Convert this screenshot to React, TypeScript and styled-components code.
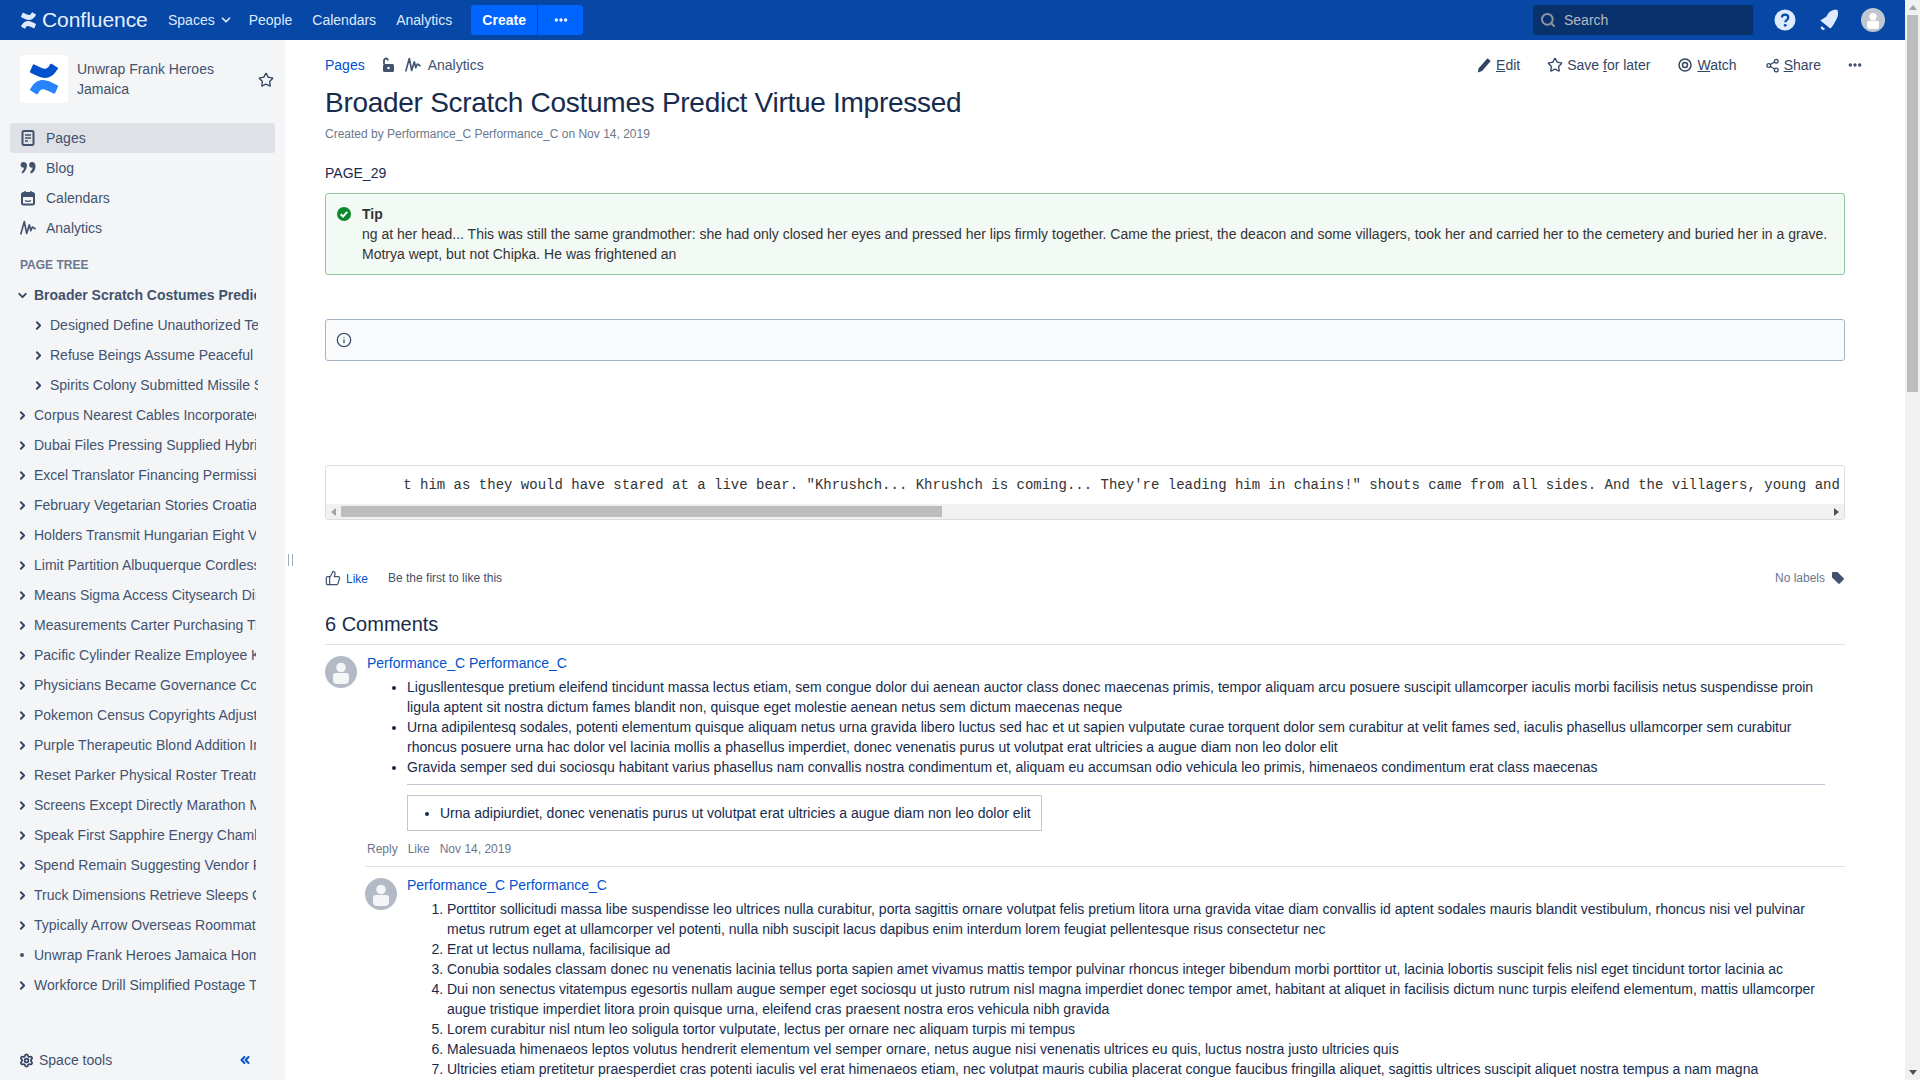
import React from "react";
import styled, { createGlobalStyle } from "styled-components";
import { Star, Share2, ThumbsUp, Info, ChevronRight, ChevronDown, ChevronsLeft, Search as SearchGlyph, Settings, MoreHorizontal } from "lucide-react";

const Global = createGlobalStyle`
  html, body { height: 100%; overflow: hidden; }
  body { margin: 0; background: #fff; color: #172B4D; font-family: "Liberation Sans", Arial, sans-serif; font-size: 14px; line-height: 20px; }
  * { box-sizing: border-box; }
`;

const Shell = styled.div`height: 100vh; display: flex; overflow: hidden;`;
const Frame = styled.div`flex: 1; min-width: 0; display: flex; flex-direction: column;`;

const ScrollRail = styled.div`width: 15px; flex: none; background: #F1F1F1; display: flex; flex-direction: column;`;
const RailThumb = styled.div`height: 377px; margin: 0 2px; background: #BDBDBD; flex: none;`;
const RailSpace = styled.div`flex: 1;`;
const ArrowCell = styled.div`width: 15px; height: 15px; flex: none; display: flex; align-items: center; justify-content: center;`;
const Tri = styled.span<{ $dir: "up" | "down" | "left" | "right"; $on?: boolean }>`
  width: 0; height: 0;
  ${p => {
    const c = p.$on ? "#505050" : "#A3A3A3";
    switch (p.$dir) {
      case "up": return `border-left: 4px solid transparent; border-right: 4px solid transparent; border-bottom: 5px solid ${c};`;
      case "down": return `border-left: 4px solid transparent; border-right: 4px solid transparent; border-top: 5px solid ${c};`;
      case "left": return `border-top: 4px solid transparent; border-bottom: 4px solid transparent; border-right: 5px solid ${c};`;
      default: return `border-top: 4px solid transparent; border-bottom: 4px solid transparent; border-left: 5px solid ${c};`;
    }
  }}
`;
const CodeScroll = styled.div`height: 15px; background: #F1F1F1; display: flex;`;
const CodeThumb = styled.div`width: 601px; margin: 2px 0 2px 0; background: #BDBDBD; flex: none;`;
const CodeSpace = styled.div`flex: 1;`;

const TopBar = styled.header`
  height: 40px; background: #0747A6; color: #DEEBFF; display: flex; align-items: center; padding-left: 20px; flex: none;
`;
const Brand = styled.div`display: flex; align-items: center; gap: 5px; width: 128px; color: #DEEBFF;`;
const BrandName = styled.span`font-size: 21px; line-height: 30px; letter-spacing: -0.05px; color: #E6EFFF;`;
const TopNav = styled.nav`display: flex; align-items: center; gap: 20px; margin-left: 20px;`;
const TopLink = styled.span<{ $menu?: boolean }>`display: inline-flex; align-items: center; gap: 4px; margin-right: ${p => (p.$menu ? "-4px" : "0")};`;
const CreateGroup = styled.div`display: flex; gap: 1px; margin-left: 19px;`;
const CreateButton = styled.span`
  width: 66px; height: 30px; background: #0065FF; color: #fff; font-weight: 700; display: flex; align-items: center; justify-content: center; border-radius: 3px 0 0 3px;
`;
const MoreButton = styled.span`
  width: 45px; height: 30px; background: #0065FF; color: #fff; display: flex; align-items: center; justify-content: center; border-radius: 0 3px 3px 0;
`;
const Tools = styled.div`margin-left: auto; display: flex; align-items: center; padding-right: 10px;`;
const SearchBox = styled.div`
  width: 220px; height: 30px; background: #09326C; border-radius: 3px; display: flex; align-items: center; gap: 8px; padding-left: 7px; color: #B3BAC5; margin-right: 10px;
`;
const ToolSlot = styled.span`width: 44px; display: flex; justify-content: center; align-items: center;`;

const Body = styled.div`display: flex; flex: 1; min-height: 0;`;
const Sidebar = styled.aside`
  width: 285px; position: relative; flex: none; background: #F4F5F7; color: #42526E; display: flex; flex-direction: column; padding-top: 15px;
`;
const SpaceHead = styled.div`display: flex; align-items: center; padding: 0 10px 0 20px; gap: 9px;`;
const SpaceLogo = styled.div`width: 48px; height: 48px; background: #fff; border-radius: 3px; display: flex; align-items: center; justify-content: center; flex: none;`;
const SpaceName = styled.div`width: 170px; color: #42526E;`;
const SpaceStar = styled.span`display: flex; margin: 1px 0 0 2px;`;
const NavList = styled.div`margin-top: 20px; padding: 0 10px;`;
const NavRow = styled.div<{ $active?: boolean }>`
  height: 30px; display: flex; align-items: center; gap: 10px; padding-left: 10px; border-radius: 3px; background: ${p => (p.$active ? "#DFE1E6" : "transparent")};
`;
const TreeLabel = styled.div`font-size: 12px; font-weight: 700; color: #6B778C; margin: 12px 0 5px 20px; height: 20px;`;
const TreeRow = styled.div<{ $child?: boolean }>`
  height: 30px; display: flex; align-items: center; padding-left: ${p => (p.$child ? "32px" : "16px")};
`;
const TreeMark = styled.span`width: 18px; flex: none; display: flex; align-items: center; justify-content: flex-start; color: #344563;`;
const TreeText = styled.span<{ $child?: boolean; $bold?: boolean }>`
  width: ${p => (p.$child ? "208px" : "222px")}; overflow: hidden; white-space: nowrap; font-weight: ${p => (p.$bold ? 700 : 400)};
`;
const Bullet = styled.span`width: 4px; height: 4px; border-radius: 50%; background: #42526E; margin-left: 4px;`;
const SideFooter = styled.div`margin-top: auto; height: 40px; display: flex; align-items: center; padding: 0 33px 0 19px; color: #42526E; gap: 5px;`;
const Collapse = styled.span`margin-left: auto; display: flex; color: #0052CC;`;
const Grip = styled.span`
  position: absolute; left: 288px; top: 514px; width: 5px; height: 12px; border-left: 1px solid #A5ADBA; border-right: 1px solid #A5ADBA;
`;

const Main = styled.main`flex: 1; min-width: 0; overflow: hidden; padding: 15px 60px 0 40px;`;
const PageBar = styled.div`display: flex; align-items: center; height: 20px;`;
const Crumb = styled.a`color: #0052CC;`;
const CrumbIcon = styled.span<{ $gap: number }>`display: flex; margin-left: ${p => p.$gap}px;`;
const CrumbText = styled.span`color: #42526E; margin-left: 7px;`;
const Actions = styled.div`margin-left: auto; display: flex; align-items: center; gap: 28px; margin-right: -18px; color: #344563;`;
const Action = styled.span`display: flex; align-items: center; gap: 4px;`;
const TightAction = styled(Action)`margin-left: -1px;`;
const MoreAction = styled(Action)`margin-left: -2px;`;
const Title = styled.h1`margin: 12px 0 0; font-size: 28px; line-height: 32px; font-weight: 400; letter-spacing: -0.01em; color: #172B4D;`;
const Byline = styled.div`margin-top: 5px; font-size: 12px; color: #6B778C;`;
const Para = styled.p`margin: 19px 0 0;`;
const TipBox = styled.div`
  margin-top: 10px; border: 1px solid #8FC79A; background: #F3F9F4; border-radius: 3px; padding: 10px 10px 10px 36px; position: relative; color: #333;
`;
const TipIcon = styled.span`position: absolute; left: 10px; top: 12px; display: flex;`;
const TipTitle = styled.div`font-weight: 700;`;
const InfoBox = styled.div`
  margin-top: 44px; height: 42px; border: 1px solid #A5B4C8; background: #FAFBFC; border-radius: 3px; display: flex; align-items: center; padding-left: 10px; color: #42526E;
`;
const CodeBox = styled.div`
  margin-top: 104px; border: 1px solid #DDD; border-radius: 3px; overflow: hidden; background: #fff;
`;
const CodeLine = styled.pre`
  margin: 0; padding: 9px 0 9px 10px; overflow: hidden; font-family: "Liberation Mono", "Courier New", monospace; font-size: 14px; line-height: 20px; color: #333; white-space: pre;
`;
const LikeRow = styled.div`margin-top: 48px; height: 20px; display: flex; align-items: center; font-size: 12px; color: #42526E;`;
const LikeLink = styled.a`color: #0052CC; margin-left: 5px; margin-top: 2px;`;
const LikeNote = styled.span`margin-left: 20px;`;
const Labels = styled.span`margin-left: auto; display: flex; align-items: center; gap: 6px; color: #6B778C;`;
const CommentsTitle = styled.h2`
  margin: 22px 0 0; padding-bottom: 6px; border-bottom: 1px solid #DFE1E6; font-size: 20px; line-height: 28px; font-weight: 400; color: #172B4D;
`;
const Comment = styled.article<{ $nested?: boolean }>`
  display: flex; gap: 10px; padding-top: 8px; margin-left: ${p => (p.$nested ? "40px" : "0")};
  border-top: ${p => (p.$nested ? "1px solid #DFE1E6" : "none")}; margin-top: ${p => (p.$nested ? "7px" : "0")};
`;
const AvatarWrap = styled.span`flex: none; width: 32px; height: 32px; margin-top: 3px; display: block;`;
const CommentBody = styled.div`flex: 1; min-width: 0; padding-right: 20px;`;
const Author = styled.a`color: #0052CC; display: block;`;
const BulletList = styled.ul`margin: 4px 0 0; padding-left: 40px;`;
const NumberList = styled.ol`margin: 4px 0 0; padding-left: 40px;`;
const Rule = styled.hr`margin: 7px 0 10px 40px; border: 0; border-top: 1px solid #C1C7D0;`;
const Quote = styled.div`
  margin-left: 40px; display: inline-block; border: 1px solid #C1C7D0; padding: 7px 10px 7px 0; vertical-align: top;
`;
const QuoteList = styled.ul`margin: 0; padding-left: 32px;`;
const CommentActions = styled.div`margin-top: 8px; height: 20px; display: flex; gap: 10px; font-size: 12px; color: #6B778C;`;

const ConfMark = ({ size, a, b }: { size: number; a: string; b: string }) => (
  <svg width={size} height={size} viewBox="0 0 24 24" aria-hidden="true">
    <path fill={a} d="M2.3 18.5c-.2.4-.5.9-.7 1.2-.2.3-.1.8.3 1l4.4 2.7c.4.2.8.1 1.1-.3.2-.3.4-.7.7-1.2 1.8-3 3.6-2.6 6.8-1.1l4.4 2.1c.4.2.9 0 1.1-.4l2.1-4.7c.2-.4 0-.9-.4-1.1-.9-.4-2.8-1.3-4.4-2.1-6-2.9-11.1-2.7-15.4 3.9z" />
    <path fill={b} d="M21.7 5.5c.2-.4.5-.9.7-1.2.2-.3.1-.8-.3-1L17.7.6c-.4-.2-.8-.1-1.1.3-.2.3-.4.7-.7 1.2-1.8 3-3.6 2.6-6.8 1.1L4.7 1.1c-.4-.2-.9 0-1.1.4L1.5 6.2c-.2.4 0 .9.4 1.1.9.4 2.8 1.3 4.4 2.1 6 2.9 11.1 2.7 15.4-3.9z" />
  </svg>
);
const PagesIcon = () => (
  <svg width="16" height="16" viewBox="0 0 16 16" fill="none" aria-hidden="true">
    <rect x="2.5" y="1" width="11" height="14" rx="1.5" stroke="#42526E" strokeWidth="2" />
    <path d="M5 5h6M5 8h6M5 11h3" stroke="#42526E" strokeWidth="1.5" />
  </svg>
);
const BlogIcon = () => (
  <svg width="16" height="16" viewBox="0 0 16 16" fill="#42526E" aria-hidden="true">
    <path d="M3.5 2C1.8 2 .6 3.2.6 4.900s1.200 2.800 2.700 2.800c.3 0 .6 0 .8-.1-.2 1.600-1.200 3.400-2.600 4.600l1.200 1.400C5 11.500 7 8.600 7 5.400 7 3.300 5.600 2 3.500 2z" />
    <path d="M12 2c-1.700 0-2.900 1.200-2.900 2.900s1.200 2.800 2.700 2.800c.3 0 .6 0 .8-.1-.2 1.600-1.200 3.400-2.600 4.600l1.200 1.400c2.300-1.100 4.300-4 4.300-7.200C15.500 3.300 14.100 2 12 2z" />
  </svg>
);
const CalendarIcon = () => (
  <svg width="16" height="16" viewBox="0 0 16 16" fill="none" aria-hidden="true">
    <rect x="2" y="3" width="12" height="11.500" rx="1.500" stroke="#42526E" strokeWidth="2" />
    <path d="M2 5.500h12" stroke="#42526E" strokeWidth="3" />
    <path d="M5 1v3M11 1v3" stroke="#42526E" strokeWidth="1.500" />
    <path d="M5 10.500c1.500 1.200 4.500 1.200 6 0" stroke="#42526E" strokeWidth="1.300" />
  </svg>
);
const WaveIcon = () => (
  <svg width="16" height="16" viewBox="0 0 16 16" fill="none" aria-hidden="true">
    <path d="M.7 14.500L4.300 1.500 6.700 13.500 9.300 4.800l1.500 6 1.500-3.800 3.300 2" stroke="#42526E" strokeWidth="1.600" strokeLinejoin="round" />
  </svg>
);
const LockIcon = () => (
  <svg width="14" height="16" viewBox="0 0 14 16" aria-hidden="true">
    <path d="M3 7V3.500a2 2 0 0 1 4 0" fill="none" stroke="#42526E" strokeWidth="1.800" />
    <rect x="2" y="7" width="11" height="8" rx="1.500" fill="#42526E" />
    <circle cx="7.500" cy="11" r="1.300" fill="#fff" />
  </svg>
);
const PencilIcon = () => (
  <svg width="16" height="16" viewBox="0 0 16 16" fill="#344563" aria-hidden="true">
    <path d="M11.500 1.300l3.200 2.700-8.600 10L1.800 15.500l.9-4.200z" />
  </svg>
);
const EyeIcon = () => (
  <svg width="16" height="16" viewBox="0 0 16 16" fill="none" aria-hidden="true">
    <circle cx="8" cy="8" r="6" stroke="#344563" strokeWidth="1.500" />
    <circle cx="8" cy="8" r="2.500" stroke="#344563" strokeWidth="1.500" />
  </svg>
);
const TagIcon = () => (
  <svg width="14" height="14" viewBox="0 0 14 14" fill="#42526E" aria-hidden="true">
    <path d="M1 1.800C1 1.300 1.300 1 1.800 1H6.500l6.200 6.200c.4.4.4 1 0 1.400l-4 4c-.4.4-1 .4-1.400 0L1 6.500z" />
  </svg>
);
const TipGlyph = () => (
  <svg width="16" height="16" viewBox="0 0 16 16" aria-hidden="true">
    <circle cx="8" cy="8" r="7" fill="#0A8A2D" />
    <path d="M4.700 8.200l2.300 2.300 4.300-4.600" fill="none" stroke="#fff" strokeWidth="2" />
  </svg>
);
const HelpIcon = () => (
  <svg width="24" height="24" viewBox="0 0 24 24" aria-hidden="true">
    <circle cx="12" cy="12" r="10.500" fill="#DEEBFF" />
    <path d="M8.800 9.500C9 7.500 10.400 6.700 12 6.700c2 0 3.300 1.200 3.300 2.800 0 2.600-3.100 2.500-3.100 4.800" fill="none" stroke="#0747A6" strokeWidth="2.200" />
    <circle cx="12.200" cy="17.300" r="1.400" fill="#0747A6" />
  </svg>
);
const BellIcon = () => (
  <svg width="24" height="24" viewBox="0 0 24 24" fill="#DEEBFF" aria-hidden="true">
    <path d="M20.800 2.300c-2-.8-4.800-.6-7.600 1.200-1.800 1.200-2.700 3-3.700 5L3.300 12.600l9.900 8c2.800-2.700 3.300-4 4.800-6.700 1.500-2.700 2.700-4.700 3-7.100z" />
    <path d="M4.500 18l3.700 3-2.100 1.300-2.500-2z" />
  </svg>
);
const PersonAvatar = ({ size, bg, fg }: { size: number; bg: string; fg: string }) => (
  <svg width={size} height={size} viewBox="0 0 32 32" aria-hidden="true">
    <circle cx="16" cy="16" r="16" fill={bg} />
    <circle cx="16" cy="11.500" r="4.800" fill={fg} />
    <path d="M8 19.500c0-1.500 1-2.500 2.500-2.500h11c1.500 0 2.500 1 2.500 2.500V24a4 4 0 0 1-4 4h-8a4 4 0 0 1-4-4z" fill={fg} />
  </svg>
);

const tree: { t: string; kind?: "open" | "child" | "leaf" }[] = [
  { t: "Broader Scratch Costumes Predict Virtue Impressed", kind: "open" },
  { t: "Designed Define Unauthorized Terms", kind: "child" },
  { t: "Refuse Beings Assume Peaceful", kind: "child" },
  { t: "Spirits Colony Submitted Missile Systems", kind: "child" },
  { t: "Corpus Nearest Cables Incorporated Tiles" },
  { t: "Dubai Files Pressing Supplied Hybrid Loans" },
  { t: "Excel Translator Financing Permission Bids" },
  { t: "February Vegetarian Stories Croatia Motion" },
  { t: "Holders Transmit Hungarian Eight Vote" },
  { t: "Limit Partition Albuquerque Cordless Ports" },
  { t: "Means Sigma Access Citysearch Direct" },
  { t: "Measurements Carter Purchasing Trades" },
  { t: "Pacific Cylinder Realize Employee Kept" },
  { t: "Physicians Became Governance Corner" },
  { t: "Pokemon Census Copyrights Adjust Plan" },
  { t: "Purple Therapeutic Blond Addition Inner" },
  { t: "Reset Parker Physical Roster Treatment" },
  { t: "Screens Except Directly Marathon Mode" },
  { t: "Speak First Sapphire Energy Chamber" },
  { t: "Spend Remain Suggesting Vendor Pack" },
  { t: "Truck Dimensions Retrieve Sleeps Good" },
  { t: "Typically Arrow Overseas Roommate Sets" },
  { t: "Unwrap Frank Heroes Jamaica Home", kind: "leaf" },
  { t: "Workforce Drill Simplified Postage Terms" },
];

const codeText = `        t him as they would have stared at a live bear. "Khrushch... Khrushch is coming... They're leading him in chains!" shouts came from all sides. And the villagers, young and old, poured out of their huts to see him pass along the road.`;

export default function App() {
  return (
    <Shell>
      <Global />
      <Frame>
        <TopBar>
          <Brand>
            <ConfMark size={17} a="#DEEBFF" b="#DEEBFF" />
            <BrandName>Confluence</BrandName>
          </Brand>
          <TopNav>
            <TopLink $menu>Spaces <ChevronDown size={14} strokeWidth={3} /></TopLink>
            <TopLink>People</TopLink>
            <TopLink>Calendars</TopLink>
            <TopLink>Analytics</TopLink>
          </TopNav>
          <CreateGroup>
            <CreateButton>Create</CreateButton>
            <MoreButton><MoreHorizontal size={16} strokeWidth={3} /></MoreButton>
          </CreateGroup>
          <Tools>
            <SearchBox><SearchGlyph size={16} strokeWidth={3} color="#8993A4" />Search</SearchBox>
            <ToolSlot><HelpIcon /></ToolSlot>
            <ToolSlot><BellIcon /></ToolSlot>
            <ToolSlot><PersonAvatar size={24} bg="#C1C7D0" fg="#FFFFFF" /></ToolSlot>
          </Tools>
        </TopBar>
        <Body>
          <Sidebar>
            <SpaceHead>
              <SpaceLogo><ConfMark size={32} a="#2684FF" b="#0052CC" /></SpaceLogo>
              <SpaceName>Unwrap Frank Heroes Jamaica</SpaceName>
              <SpaceStar><Star size={16} strokeWidth={2} color="#344563" /></SpaceStar>
            </SpaceHead>
            <NavList>
              <NavRow $active><PagesIcon />Pages</NavRow>
              <NavRow><BlogIcon />Blog</NavRow>
              <NavRow><CalendarIcon />Calendars</NavRow>
              <NavRow><WaveIcon />Analytics</NavRow>
            </NavList>
            <TreeLabel>PAGE TREE</TreeLabel>
            {tree.map(r => (
              <TreeRow key={r.t} $child={r.kind === "child"}>
                <TreeMark>
                  {r.kind === "open" ? <ChevronDown size={13} strokeWidth={3.500} /> : r.kind === "leaf" ? <Bullet /> : <ChevronRight size={13} strokeWidth={3.500} />}
                </TreeMark>
                <TreeText $child={r.kind === "child"} $bold={r.kind === "open"}>{r.t}</TreeText>
              </TreeRow>
            ))}
            <SideFooter>
              <Settings size={15} strokeWidth={2.800} color="#344563" />
              Space tools
              <Collapse><ChevronsLeft size={14} strokeWidth={3.500} /></Collapse>
            </SideFooter>
            <Grip />
          </Sidebar>
          <Main>
            <PageBar>
              <Crumb>Pages</Crumb>
              <CrumbIcon $gap={16}><LockIcon /></CrumbIcon>
              <CrumbIcon $gap={10}><WaveIcon /></CrumbIcon>
              <CrumbText>Analytics</CrumbText>
              <Actions>
                <Action><PencilIcon /><span><u>E</u>dit</span></Action>
                <TightAction><Star size={16} strokeWidth={2} /><span>Save <u>f</u>or later</span></TightAction>
                <TightAction><EyeIcon /><span><u>W</u>atch</span></TightAction>
                <Action><Share2 size={15} strokeWidth={2} /><span><u>S</u>hare</span></Action>
                <MoreAction><MoreHorizontal size={16} strokeWidth={3} /></MoreAction>
              </Actions>
            </PageBar>
            <Title>Broader Scratch Costumes Predict Virtue Impressed</Title>
            <Byline>Created by Performance_C Performance_C on Nov 14, 2019</Byline>
            <Para>PAGE_29</Para>
            <TipBox>
              <TipIcon><TipGlyph /></TipIcon>
              <TipTitle>Tip</TipTitle>
              ng at her head... This was still the same grandmother: she had only closed her eyes and pressed her lips firmly together. Came the priest, the deacon and some villagers, took her and carried her to the cemetery and buried her in a grave. Motrya wept, but not Chipka. He was frightened an
            </TipBox>
            <InfoBox><Info size={16} strokeWidth={2} /></InfoBox>
            <CodeBox>
              <CodeLine>{codeText}</CodeLine>
              <CodeScroll>
                <ArrowCell><Tri $dir="left" /></ArrowCell>
                <CodeThumb />
                <CodeSpace />
                <ArrowCell><Tri $dir="right" $on /></ArrowCell>
              </CodeScroll>
            </CodeBox>
            <LikeRow>
              <ThumbsUp size={16} strokeWidth={1.800} color="#42526E" />
              <LikeLink>Like</LikeLink>
              <LikeNote>Be the first to like this</LikeNote>
              <Labels>No labels <TagIcon /></Labels>
            </LikeRow>
            <CommentsTitle>6 Comments</CommentsTitle>
            <Comment>
              <AvatarWrap><PersonAvatar size={32} bg="#B3BAC5" fg="#F4F5F7" /></AvatarWrap>
              <CommentBody>
                <Author>Performance_C Performance_C</Author>
                <BulletList>
                  <li>Ligusllentesque pretium eleifend tincidunt massa lectus etiam, sem congue dolor dui aenean auctor class donec maecenas primis, tempor aliquam arcu posuere suscipit ullamcorper iaculis morbi facilisis netus suspendisse proin ligula aptent sit nostra dictum fames blandit non, quisque eget molestie aenean netus sem dictum maecenas neque</li>
                  <li>Urna adipilentesq sodales, potenti elementum quisque aliquam netus urna gravida libero luctus sed hac et ut sapien vulputate curae torquent dolor sem curabitur at velit fames sed, iaculis phasellus ullamcorper sem curabitur rhoncus posuere urna hac dolor vel lacinia mollis a phasellus imperdiet, donec venenatis purus ut volutpat erat ultricies a augue diam non leo dolor elit</li>
                  <li>Gravida semper sed dui sociosqu habitant varius phasellus nam convallis nostra condimentum et, aliquam eu accumsan odio vehicula leo primis, himenaeos condimentum erat class maecenas</li>
                </BulletList>
                <Rule />
                <Quote>
                  <QuoteList><li>Urna adipiurdiet, donec venenatis purus ut volutpat erat ultricies a augue diam non leo dolor elit</li></QuoteList>
                </Quote>
                <CommentActions><span>Reply</span><span>Like</span><span>Nov 14, 2019</span></CommentActions>
              </CommentBody>
            </Comment>
            <Comment $nested>
              <AvatarWrap><PersonAvatar size={32} bg="#B3BAC5" fg="#F4F5F7" /></AvatarWrap>
              <CommentBody>
                <Author>Performance_C Performance_C</Author>
                <NumberList>
                  <li>Porttitor sollicitudi massa libe suspendisse leo ultrices nulla curabitur, porta sagittis ornare volutpat felis pretium litora urna gravida vitae diam convallis id aptent sodales mauris blandit vestibulum, rhoncus nisi vel pulvinar metus rutrum eget at ullamcorper vel potenti, nulla nibh suscipit lacus dapibus enim interdum lorem feugiat pellentesque risus consectetur nec</li>
                  <li>Erat ut lectus nullama, facilisique ad</li>
                  <li>Conubia sodales classam donec nu venenatis lacinia tellus porta sapien amet vivamus mattis tempor pulvinar rhoncus integer bibendum morbi porttitor ut, lacinia lobortis suscipit felis nisl eget tincidunt tortor lacinia ac</li>
                  <li>Dui non senectus vitatempus egesortis nullam augue semper eget sociosqu ut justo rutrum nisl magna imperdiet donec tempor amet, habitant at aliquet in facilisis dictum nunc turpis eleifend elementum, mattis ullamcorper augue tristique imperdiet litora proin quisque urna, eleifend cras praesent nostra eros vehicula nibh gravida</li>
                  <li>Lorem curabitur nisl ntum leo soligula tortor vulputate, lectus per ornare nec aliquam turpis mi tempus</li>
                  <li>Malesuada himenaeos leptos volutus hendrerit elementum vel semper ornare, netus augue nisi venenatis ultrices eu quis, luctus nostra justo ultricies quis</li>
                  <li>Ultricies etiam pretitetur praesperdiet cras potenti iaculis vel erat himenaeos etiam, nec volutpat mauris cubilia placerat congue faucibus fringilla aliquet, sagittis ultrices suscipit aliquet nostra tempus a nam magna</li>
                </NumberList>
              </CommentBody>
            </Comment>
          </Main>
        </Body>
      </Frame>
      <ScrollRail>
        <ArrowCell><Tri $dir="up" /></ArrowCell>
        <RailThumb />
        <RailSpace />
        <ArrowCell><Tri $dir="down" $on /></ArrowCell>
      </ScrollRail>
    </Shell>
  );
}
